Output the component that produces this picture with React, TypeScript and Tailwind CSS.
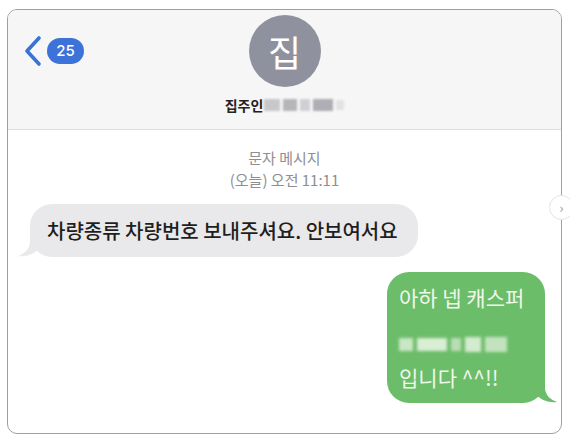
import React from 'react';

// Tail drawn under the bottom corner of a chat bubble.
function Tail({ side, color }: { side: 'left' | 'right'; color: string }) {
  const d =
    side === 'left'
      ? 'M20 0 H12 V6 C12 13 6 18 0 20 C8 21 14 18.5 20 14 Z'
      : 'M0 0 H8 V6 C8 13 14 18 20 20 C12 21 6 18.5 0 14 Z';
  return (
    <svg
      width="20"
      height="21"
      viewBox="0 0 20 21"
      className={
        side === 'left' ? 'absolute -left-[12px] bottom-0' : 'absolute -right-[12px] bottom-0'
      }
    >
      <path d={d} fill={color} />
    </svg>
  );
}

export default function App() {
  return (
    <div className="relative w-[570px] h-[443px] bg-white pl-[7px] pt-[9px] font-['Noto_Sans_CJK_KR',sans-serif]">
      <div className="w-[555px] h-[425px] rounded-[10px] border border-[#a0a0a0] overflow-hidden flex flex-col bg-white">
        {/* header */}
        <div className="bg-[#f6f6f6] border-b border-[#dedede] pt-[5px] pb-[15px] flex flex-col items-center">
          <div className="w-full grid grid-cols-[1fr_72px_1fr] items-center">
            <div className="flex items-center gap-[4px] pl-[15px]">
              <svg width="20" height="32" viewBox="0 0 20 32">
                <polyline
                  points="16,3 4,16 16,29"
                  fill="none"
                  stroke="#3b72d6"
                  strokeWidth="3.6"
                  strokeLinecap="round"
                  strokeLinejoin="round"
                />
              </svg>
              <span className="h-[26px] w-[37px] rounded-full bg-[#3d73d8] text-white text-[15px] font-medium flex items-center justify-center font-['Inter',sans-serif]">
                25
              </span>
            </div>
            <div className="w-[72px] h-[72px] rounded-full bg-[#8f929e] flex items-center justify-center text-white text-[36px]">
              집
            </div>
            <div />
          </div>
          <div className="mt-[9px] flex items-center h-[18px]">
            <span className="text-[14px] font-bold text-[#222] leading-[18px]">집주인</span>
            <span className="flex items-center gap-[3px] ml-[1px] blur-[1.2px]">
              <span className="w-[16px] h-[12px] bg-[#c7c7cc]" />
              <span className="w-[14px] h-[12px] bg-[#b5b5ba]" />
              <span className="w-[10px] h-[12px] bg-[#d0d0d4]" />
              <span className="w-[20px] h-[12px] bg-[#aeaeb4]" />
              <span className="w-[8px] h-[10px] bg-[#e2e2e5]" />
            </span>
          </div>
        </div>

        {/* conversation */}
        <div className="flex-1 flex flex-col pt-[17px]">
          <div className="flex flex-col items-center text-[15px] leading-[22px] text-[#8e8e93]">
            <span>문자 메시지</span>
            <span>(오늘) 오전 11:11</span>
          </div>

          <div className="mt-[13px] ml-[22px] self-start relative">
            <div className="relative z-10 h-[53px] rounded-[22px] bg-[#e9e9eb] pl-[17px] pr-[20px] flex items-center text-[20px] font-medium text-[#1f1f1f]">
              차량종류 차량번호 보내주셔요. 안보여서요
            </div>
            <Tail side="left" color="#e9e9eb" />
          </div>

          <div className="mt-[15px] mr-[16px] self-end relative">
            <div className="relative z-10 w-[158px] h-[131px] rounded-[22px] bg-[#6cbd69] pl-[12px] pt-[12px] flex flex-col text-[21px] leading-[26px] text-[#eef8ec]">
              <span>아하 넵 캐스퍼</span>
              <span className="mt-[24px] h-[20px] flex items-center gap-[4px] blur-[1.5px]">
                <span className="w-[14px] h-[13px] bg-[#c9e6c5]" />
                <span className="w-[30px] h-[13px] bg-[#d8eed5]" />
                <span className="w-[10px] h-[13px] bg-[#b9ddb4]" />
                <span className="w-[16px] h-[15px] bg-[#d3ebcf]" />
                <span className="w-[22px] h-[15px] bg-[#c3e3be]" />
              </span>
              <span className="mt-[10px]">입니다 ^^!!</span>
            </div>
            <Tail side="right" color="#6cbd69" />
          </div>
        </div>
      </div>

      {/* carousel arrow over the right edge */}
      <div className="absolute left-[549px] top-[195px] w-[25px] h-[25px] rounded-full bg-white border border-[#e4e4e4] flex items-center justify-center text-[#999] text-[13px]">
        ›
      </div>
    </div>
  );
}
